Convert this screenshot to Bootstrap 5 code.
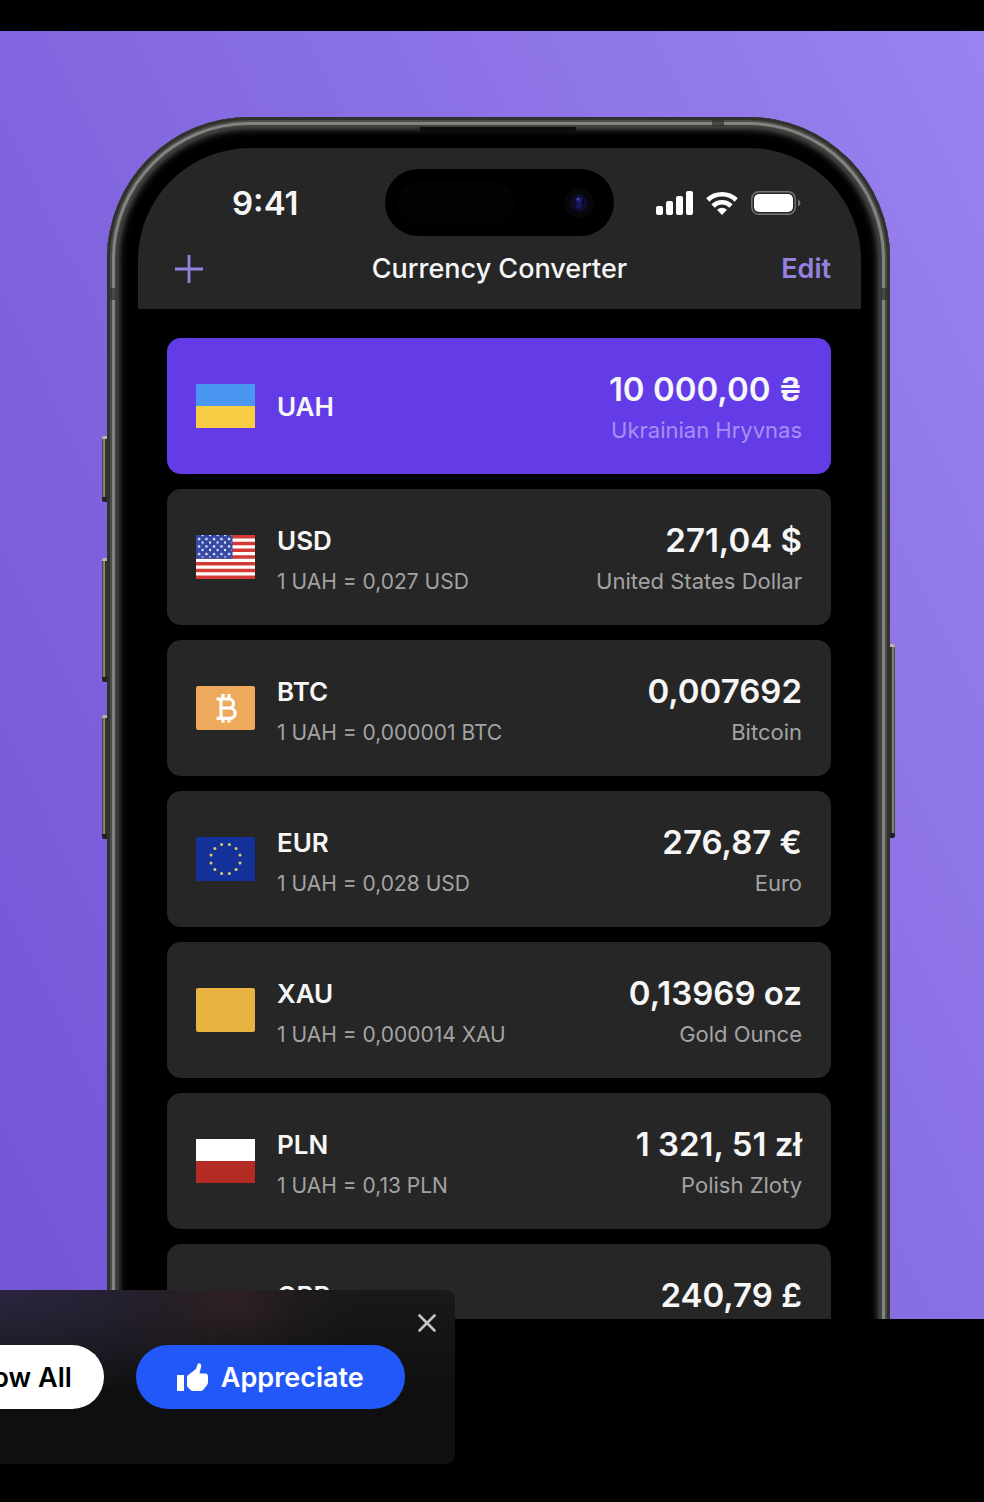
<!DOCTYPE html>
<html lang="en">
<head>
<meta charset="utf-8">
<meta name="viewport" content="width=device-width, initial-scale=1">
<title>Currency Converter</title>
<link href="https://cdn.jsdelivr.net/npm/bootstrap@5.3.0/dist/css/bootstrap.min.css" rel="stylesheet">
<style>
  body { background: #000; color: #f6f6f6; font-family: Inter, "Liberation Sans", sans-serif; padding: 31px 0 183px; }
  .stage { background: linear-gradient(64deg, #7355d6, #8368e0 45%, #9a82f0); padding: 86px 94px 0 107px; min-height: 0; }
  .phone { background: #000; border-radius: 142px 142px 0 0; padding: 31px 29px 0 31px; height: 1500px;
    box-shadow: inset 0 0 0 3px #30302f, inset 0 0 0 5px #4c4c4a, inset 0 0 1px 8px #858582, inset 0 0 1px 11px #3d3d3c, inset 0 0 5px 12px #484847, inset 0 0 8px 14px #1c1c1c; }
  .side-key { width: 5px; background: linear-gradient(90deg, #35332f, #a39c8c 45%, #35342f 70%); border-top: 3px solid #b9b4a8; border-bottom: 5px solid #24211c; border-radius: 2px 0 0 2px; left: -5px; }
  .key-action { top: 319px; height: 66px; }
  .key-up { top: 441px; height: 124px; }
  .key-down { top: 598px; height: 124px; }
  .key-power { top: 527px; height: 194px; left: auto; right: -5px; background: linear-gradient(270deg, #35332f, #a39c8c 45%, #35342f 70%); border-radius: 0 2px 2px 0; }
  .band { background: #30302f; opacity: .7; }
  .band-side { top: 171px; width: 9px; height: 12px; }
  .band-top { top: 2px; right: 166px; width: 12px; height: 7px; }
  .speaker { top: 10px; left: 50%; width: 156px; height: 5px; margin-left: -79px; background: #0c0c0c; border-radius: 0 0 4px 4px; }
  .screen-top { background: #262626; border-radius: 112px 112px 0 0; padding-top: 21px; }
  .status { display: grid; grid-template-columns: 1fr 229px 1fr; }
  .clock { font-size: 33px; line-height: 40px; font-weight: 600; padding-left: 94px; }
  .island { height: 67px; background: #000; border-radius: 34px; padding: 0 20px 0 12px; }
  .sensor { width: 118px; height: 42px; border-radius: 21px; background: #030303; }
  .signals { padding-right: 60px; gap: 13px; }
  .titlebar { display: grid; grid-template-columns: 1fr auto 1fr; height: 73px; padding: 0 30px 7px; }
  .titlebar h1 { font-size: 27px; line-height: 36px; font-weight: 500; }
  .plain-btn { background: none; border: 0; padding: 0; color: #9582e0; font-size: 27px; line-height: 36px; font-weight: 600; }
  .add-btn { padding-left: 6px; }
  .rates { padding: 29px 30px 0 29px; gap: 15px; }
  .rate { height: 136px; background: #262626; border-radius: 14px; padding: 0 29px; gap: 22px; }
  .rate.is-base { background: #633ce8; }
  .flag { width: 59px; height: 44px; }
  .code { font-size: 26px; line-height: 41px; font-weight: 600; }
  .amount { font-size: 33px; line-height: 41px; font-weight: 600; }
  .note { font-size: 21px; line-height: 41px; color: #a3a3a3; }
  .amount + .note { font-size: 22px; }
  .is-base .note { color: #a78ff3; }
  .prompt { left: -117px; bottom: 38px; border-radius: 0 9px 9px 0; padding: 55px 50px 55px 32px; gap: 32px;
    background: radial-gradient(ellipse 130px 90px at 347px 10px, #352323bb, #2a1e1e55 50%, #1a1a1a00), radial-gradient(ellipse 330px 110px at 110px 0, #2b253f, #1a1a1a00), linear-gradient(#191919, #0f0f0f 60%); }
  .pill { height: 64px; font-size: 27px; line-height: 36px; font-weight: 600; border: 0; border-radius: 32px; padding-top: 2px; }
  .pill-light { background: #fff; color: #000; padding-left: 32px; padding-right: 32px; }
  .pill-blue { background: #2358f8; color: #fff; padding-left: 41px; padding-right: 41px; gap: 12px; }
  .close-btn { top: 21px; right: 16px; width: 24px; height: 24px; }
</style>
</head>
<body class="vh-100 d-flex flex-column overflow-hidden">

<main class="stage flex-grow-1 overflow-hidden">
  <div class="phone position-relative">
    <span class="side-key key-action position-absolute"></span>
    <span class="side-key key-up position-absolute"></span>
    <span class="side-key key-down position-absolute"></span>
    <span class="side-key key-power position-absolute"></span>
    <span class="band band-side position-absolute start-0"></span>
    <span class="band band-side position-absolute end-0"></span>
    <span class="band band-top position-absolute"></span>
    <span class="speaker position-absolute"></span>

    <div class="screen">
      <header class="screen-top">
        <div class="status align-items-center">
          <div class="clock">9:41</div>
          <div class="island d-flex align-items-center justify-content-between">
            <span class="sensor"></span>
            <svg width="30" height="30" viewBox="0 0 30 30" aria-hidden="true"><circle cx="15" cy="15" r="15" fill="#070709"/><circle cx="15" cy="15" r="9" fill="#0d0d2b"/><circle cx="15" cy="12" r="3" fill="#20207a"/><circle cx="15" cy="18" r="3" fill="#18185c"/><circle cx="14" cy="11" r="1" fill="#5a5ac0"/></svg>
          </div>
          <div class="signals d-flex align-items-center justify-content-end">
            <svg width="37" height="24" viewBox="0 0 37 24" fill="#fff" role="img" aria-label="Signal"><rect x="0" y="15" width="7" height="9" rx="2"/><rect x="10" y="10" width="7" height="14" rx="2"/><rect x="20" y="5" width="7" height="19" rx="2"/><rect x="30" y="0" width="7" height="24" rx="2"/></svg>
            <svg width="32" height="24" viewBox="0 0 32 24" role="img" aria-label="Wi-Fi"><g fill="none" stroke="#fff" stroke-width="4.600"><path d="M1.800 9a20.400 20.400 0 0 1 28.400 0"/><path d="M7 15a12.800 12.800 0 0 1 18 0"/></g><path d="M16 24l-5-5.200q5-4.200 10 0z" fill="#fff"/></svg>
            <svg width="50" height="24" viewBox="0 0 50 24" role="img" aria-label="Battery"><rect x=".8" y=".8" width="43.400" height="22.400" rx="7" fill="none" stroke="#777" stroke-width="1.400"/><rect x="3" y="3" width="39" height="18" rx="5" fill="#fff"/><path d="M47 8.500q2.500 1 2.500 3.500T47 15.500z" fill="#777"/></svg>
          </div>
        </div>
        <div class="titlebar align-items-center">
          <button type="button" class="plain-btn add-btn d-flex" aria-label="Add currency"><svg width="30" height="30" viewBox="0 0 30 30"><path d="M15 1v28M1 15h28" stroke="#9582e0" stroke-width="2.800"/></svg></button>
          <h1 class="m-0">Currency Converter</h1>
          <button type="button" class="plain-btn text-end">Edit</button>
        </div>
      </header>

      <ul class="rates list-unstyled d-flex flex-column m-0">
        <li class="rate is-base d-flex align-items-center">
          <svg class="flag" viewBox="0 0 59 44"><path fill="#4b96f2" d="M0 0h59v22H0z"/><path fill="#f6cd45" d="M0 22h59v22H0z"/></svg>
          <div class="code">UAH</div>
          <div class="ms-auto text-end pt-2"><div class="amount">10 000,00 ₴</div><div class="note">Ukrainian Hryvnas</div></div>
        </li>
        <li class="rate d-flex align-items-center">
          <svg class="flag" viewBox="0 0 59 44">
            <defs><pattern id="stars" width="7.500" height="7.500" patternUnits="userSpaceOnUse"><circle cx="3" cy="4" r="1.200" fill="#fff"/><circle cx="6.700" cy="7.500" r="1.200" fill="#fff"/><circle cx="6.700" cy="0" r="1.200" fill="#fff"/></pattern></defs>
            <path fill="#fff" d="M0 0h59v44H0z"/>
            <path d="M0 1.700h59M0 8.500h59M0 15.200h59M0 22h59M0 28.800h59M0 35.500h59M0 42.300h59" stroke="#d33a34" stroke-width="3.400"/>
            <path fill="#3448a5" d="M0 0h36.500v23.700H0z"/><path fill="url(#stars)" d="M0 0h36v22.500H0z"/>
          </svg>
          <div class="pt-2"><div class="code">USD</div><div class="note">1 UAH = 0,027 USD</div></div>
          <div class="ms-auto text-end pt-2"><div class="amount">271,04 $</div><div class="note">United States Dollar</div></div>
        </li>
        <li class="rate d-flex align-items-center">
          <svg class="flag" viewBox="0 0 59 44"><rect width="59" height="44" rx="2" fill="#eeaa5c"/><path d="M20.500 13H33a4.300 4.300 0 0 1 0 9h-8.500H34a4.800 4.800 0 0 1 0 10.300H20.500M25 13v19M27 8v5M33 8v5M27 32v4.500M33 32v4.500" fill="none" stroke="#fff" stroke-width="3.200"/></svg>
          <div class="pt-2"><div class="code">BTC</div><div class="note">1 UAH = 0,000001 BTC</div></div>
          <div class="ms-auto text-end pt-2"><div class="amount">0,007692</div><div class="note">Bitcoin</div></div>
        </li>
        <li class="rate d-flex align-items-center">
          <svg class="flag" viewBox="0 0 59 44"><path fill="#14319a" d="M0 0h59v44H0z"/><g fill="#d8cf68"><circle cx="25.600" cy="7.500" r="1.500"/><circle cx="33.400" cy="7.500" r="1.500"/><circle cx="40.100" cy="11.400" r="1.500"/><circle cx="44" cy="18.100" r="1.500"/><circle cx="44" cy="25.900" r="1.500"/><circle cx="40.100" cy="32.600" r="1.500"/><circle cx="33.400" cy="36.500" r="1.500"/><circle cx="25.600" cy="36.500" r="1.500"/><circle cx="18.900" cy="32.600" r="1.500"/><circle cx="15" cy="25.900" r="1.500"/><circle cx="15" cy="18.100" r="1.500"/><circle cx="18.900" cy="11.400" r="1.500"/></g></svg>
          <div class="pt-2"><div class="code">EUR</div><div class="note">1 UAH = 0,028 USD</div></div>
          <div class="ms-auto text-end pt-2"><div class="amount">276,87 €</div><div class="note">Euro</div></div>
        </li>
        <li class="rate d-flex align-items-center">
          <svg class="flag" viewBox="0 0 59 44"><rect width="59" height="44" rx="2" fill="#e9b440"/></svg>
          <div class="pt-2"><div class="code">XAU</div><div class="note">1 UAH = 0,000014 XAU</div></div>
          <div class="ms-auto text-end pt-2"><div class="amount">0,13969 oz</div><div class="note">Gold Ounce</div></div>
        </li>
        <li class="rate d-flex align-items-center">
          <svg class="flag" viewBox="0 0 59 44"><path fill="#fff" d="M0 0h59v22H0z"/><path fill="#b32b22" d="M0 22h59v22H0z"/></svg>
          <div class="pt-2"><div class="code">PLN</div><div class="note">1 UAH = 0,13 PLN</div></div>
          <div class="ms-auto text-end pt-2"><div class="amount">1 321, 51 zł</div><div class="note">Polish Zloty</div></div>
        </li>
        <li class="rate d-flex align-items-center">
          <svg class="flag" viewBox="0 0 59 44"><path fill="#283f8f" d="M0 0h59v44H0z"/><path d="M0 0l59 44M59 0L0 44" stroke="#fff" stroke-width="9"/><path d="M0 0l59 44M59 0L0 44" stroke="#c8332e" stroke-width="4"/><path d="M29.500 0v44M0 22h59" stroke="#fff" stroke-width="13"/><path d="M29.500 0v44M0 22h59" stroke="#c8332e" stroke-width="8"/></svg>
          <div class="pt-2"><div class="code">GBP</div><div class="note">&nbsp;</div></div>
          <div class="ms-auto text-end pt-2"><div class="amount">240,79 £</div><div class="note">&nbsp;</div></div>
        </li>
      </ul>
    </div>
  </div>
</main>

<aside class="prompt position-fixed d-flex align-items-center" aria-label="Follow and appreciate">
  <button type="button" class="pill pill-light text-nowrap">Follow All</button>
  <button type="button" class="pill pill-blue d-flex align-items-center">
    <svg width="32" height="30" viewBox="0 0 32 30" fill="#fff" aria-hidden="true"><path d="M0 12h7v16H0zM10 13l9-7 1.500-4.500Q21 .2 22 .2q2.200 0 2.200 3L22.500 10.500H28Q31 10.500 31 13.500V19q0 1.500-.8 2.700L26.500 26.500Q25.300 28 23.500 28H16q-1.500 0-2.500-1L11 24.500Q10 23.500 10 22z"/></svg>
    Appreciate
  </button>
  <button type="button" class="plain-btn close-btn position-absolute d-flex align-items-center justify-content-center" aria-label="Close"><svg width="18" height="18" viewBox="0 0 18 18"><path d="M1.500 1.500l15 15M16.500 1.500l-15 15" stroke="#c4c4c4" stroke-width="2.600" stroke-linecap="round"/></svg></button>
</aside>

<script src="https://cdn.jsdelivr.net/npm/bootstrap@5.3.0/dist/js/bootstrap.bundle.min.js"></script>
</body>
</html>
